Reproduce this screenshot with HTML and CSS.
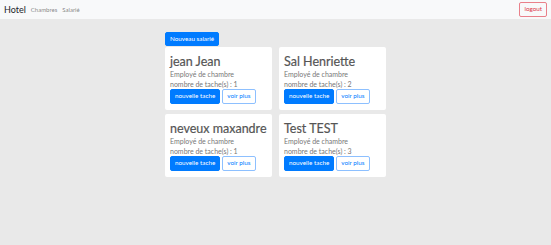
FILE: index.html
```html
<!DOCTYPE html>
<html lang="fr">
<head>
  <meta charset="UTF-8" />
  <meta name="viewport" content="width=device-width, initial-scale=1" />
  <title>Hotel - Salariés</title>
  <link rel="stylesheet" href="styles.css">
</head>
<body>

<nav class="navbar">
  <div class="nav-left">
    <a class="brand" href="#">Hotel</a>
    <a class="nav-link" href="#">Chambres</a>
    <a class="nav-link" href="#">Salarié</a>
  </div>
  <button class="btn btn-outline-danger">logout</button>
</nav>

<div class="container">
  <div class="toolbar">
    <button class="btn btn-primary">Nouveau salarié</button>
  </div>

  <div class="grid">
    <div class="card">
      <h2 class="card-title">jean Jean</h2>
      <p class="card-text">Employé de chambre</p>
      <p class="card-text">nombre de tache(s) : 1</p>
      <div class="actions">
        <button class="btn btn-primary">nouvelle tache</button>
        <button class="btn btn-outline-primary">voir plus</button>
      </div>
    </div>

    <div class="card">
      <h2 class="card-title">Sal Henriette</h2>
      <p class="card-text">Employé de chambre</p>
      <p class="card-text">nombre de tache(s) : 2</p>
      <div class="actions">
        <button class="btn btn-primary">nouvelle tache</button>
        <button class="btn btn-outline-primary">voir plus</button>
      </div>
    </div>

    <div class="card">
      <h2 class="card-title">neveux maxandre</h2>
      <p class="card-text">Employé de chambre</p>
      <p class="card-text">nombre de tache(s) : 1</p>
      <div class="actions">
        <button class="btn btn-primary">nouvelle tache</button>
        <button class="btn btn-outline-primary">voir plus</button>
      </div>
    </div>

    <div class="card">
      <h2 class="card-title">Test TEST</h2>
      <p class="card-text">Employé de chambre</p>
      <p class="card-text">nombre de tache(s) : 3</p>
      <div class="actions">
        <button class="btn btn-primary">nouvelle tache</button>
        <button class="btn btn-outline-primary">voir plus</button>
      </div>
    </div>
  </div>
</div>

</body>
</html>
```

FILE: styles.css
```css
body {
  font-family: 'Lato', 'Open Sans', sans-serif;
  background: #e9e9e9;
  margin: 0;
  color: #212529;
}

.navbar {
  display: flex;
  justify-content: space-between;
  align-items: center;
  height: 19px;
  padding: 0 4px 0 4px;
  background: #f8f9fa;
}

.nav-left {
  display: flex;
  align-items: center;
}

.brand {
  font-size: 9px;
  color: #212529;
  text-decoration: none;
  margin-right: 5px;
}

.nav-link {
  font-size: 6px;
  color: rgba(0, 0, 0, 0.5);
  text-decoration: none;
  margin-right: 5px;
}

.btn {
  display: inline-flex;
  align-items: center;
  justify-content: center;
  font-family: inherit;
  font-size: 6.3px;
  line-height: 1;
  padding: 0 4px;
  border-radius: 2px;
  border: 1px solid transparent;
  background: none;
  cursor: pointer;
}

.btn-primary {
  background: #007bff;
  border-color: #007bff;
  color: #fff;
}

.btn-outline-primary {
  color: #007bff;
  border-color: #8dc0ff;
  background: #fff;
}

.btn-outline-danger {
  color: #dc3545;
  border-color: #e9808a;
  height: 15px;
  padding: 0 4px;
}

.container {
  width: 221px;
  margin: 0 auto;
  padding-top: 13px;
}

.toolbar {
  display: flex;
  margin-bottom: 1px;
}

.toolbar .btn {
  height: 14px;
}

.grid {
  display: grid;
  grid-template-columns: 107px 107px;
  column-gap: 7px;
  row-gap: 4px;
}

.card {
  background: #fff;
  border-radius: 2px;
  padding: 6px 5px 7px;
  height: 63px;
  box-sizing: border-box;
}

.card-title {
  font-size: 12.5px;
  font-weight: 400;
  color: #555;
  margin: 0;
  line-height: 17px;
  white-space: nowrap;
  -webkit-text-stroke: 0.2px #555;
}

.card-text {
  font-size: 7px;
  color: #777;
  margin: 0;
  line-height: 9.5px;
}

.actions {
  display: flex;
  gap: 2px;
}

.actions .btn {
  height: 15px;
}
```
